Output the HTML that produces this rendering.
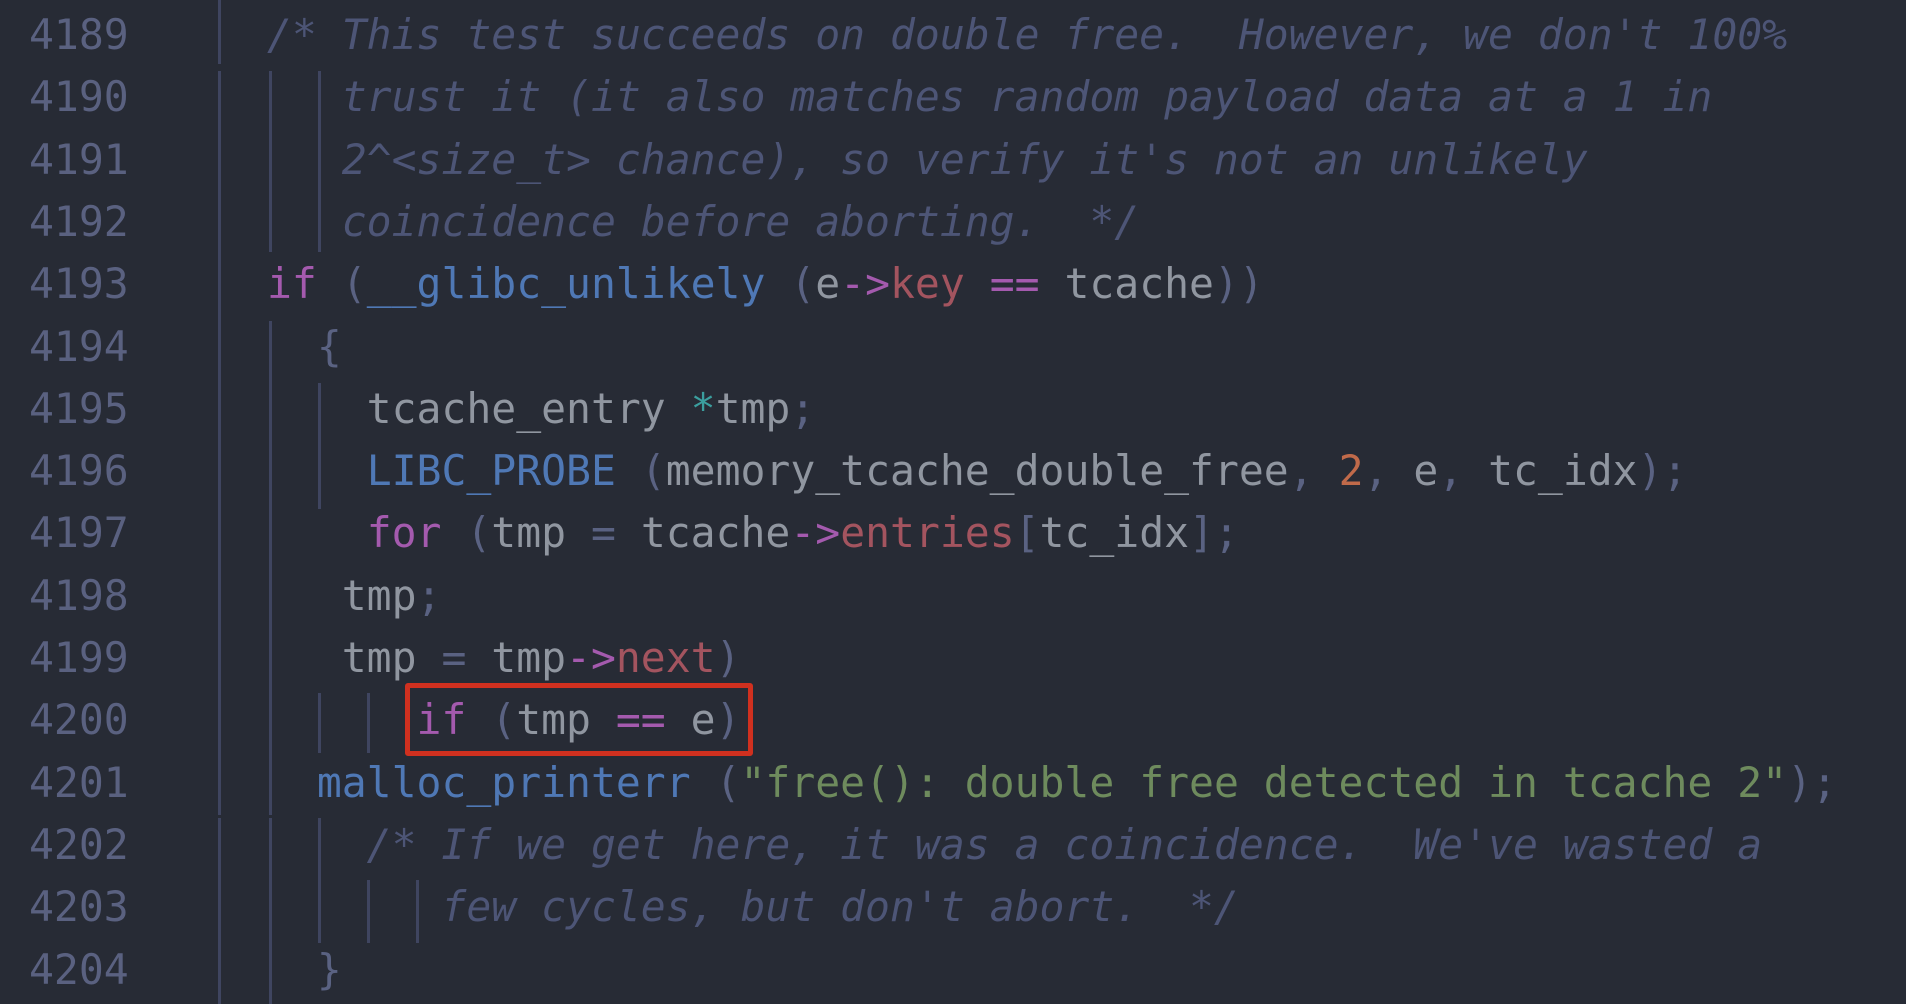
<!DOCTYPE html>
<html><head><meta charset="utf-8"><style>
body{margin:0;width:1906px;height:1002px;background:#272b35;overflow:hidden;position:relative;font-family:"DejaVu Sans Mono","Liberation Mono",monospace;font-size:41.4px}
.l{position:absolute;left:0;height:62px;line-height:62px;white-space:pre;color:#9096a0}
.n{position:absolute;left:29px;color:#5a6180}
.c{position:absolute;left:267px}
.cm{color:#4d5576;font-style:italic}
.k{color:#a45aae}.f{color:#4f78b5}.r{color:#a3545f}.s{color:#6e8b5d}.o{color:#c06a4a}.t{color:#3b9e9e}.p{color:#5a6282}
.g{position:absolute;width:3px;background:#3f4560}
.box{position:absolute;left:405px;top:683px;width:338px;height:63px;border:5px solid #d0301f;border-radius:3px}
</style></head><body>
<div class="g" style="left:218px;top:0;height:64px"></div>
<div class="g" style="left:218px;top:71px;height:744px"></div>
<div class="g" style="left:218px;top:818px;height:186px"></div>
<div class="g" style="left:269px;top:71px;height:181px"></div>
<div class="g" style="left:318px;top:71px;height:181px"></div>
<div class="g" style="left:269px;top:321px;height:494px"></div>
<div class="g" style="left:318px;top:383px;height:126px"></div>
<div class="g" style="left:318px;top:693px;height:60px"></div>
<div class="g" style="left:367px;top:693px;height:60px"></div>
<div class="g" style="left:269px;top:818px;height:186px"></div>
<div class="g" style="left:318px;top:818px;height:125px"></div>
<div class="g" style="left:367px;top:880px;height:63px"></div>
<div class="g" style="left:416px;top:880px;height:63px"></div>

<div class="l" style="top:4px"><span class="n">4189</span><span class="c cm">/* This test succeeds on double free.  However, we don't 100%</span></div>
<div class="l" style="top:66px"><span class="n">4190</span><span class="c cm">   trust it (it also matches random payload data at a 1 in</span></div>
<div class="l" style="top:129px"><span class="n">4191</span><span class="c cm">   2^&lt;size_t&gt; chance), so verify it's not an unlikely</span></div>
<div class="l" style="top:191px"><span class="n">4192</span><span class="c cm">   coincidence before aborting.  */</span></div>
<div class="l" style="top:253px"><span class="n">4193</span><span class="c"><span class="k">if</span> <span class="p">(</span><span class="f">__glibc_unlikely</span> <span class="p">(</span>e<span class="k">-&gt;</span><span class="r">key</span> <span class="k">==</span> tcache<span class="p">))</span></span></div>
<div class="l" style="top:316px"><span class="n">4194</span><span class="c">  <span class="p">{</span></span></div>
<div class="l" style="top:378px"><span class="n">4195</span><span class="c">    tcache_entry <span class="t">*</span>tmp<span class="p">;</span></span></div>
<div class="l" style="top:440px"><span class="n">4196</span><span class="c">    <span class="f">LIBC_PROBE</span> <span class="p">(</span>memory_tcache_double_free<span class="p">,</span> <span class="o">2</span><span class="p">,</span> e<span class="p">,</span> tc_idx<span class="p">);</span></span></div>
<div class="l" style="top:502px"><span class="n">4197</span><span class="c">    <span class="k">for</span> <span class="p">(</span>tmp <span class="p">=</span> tcache<span class="k">-&gt;</span><span class="r">entries</span><span class="p">[</span>tc_idx<span class="p">];</span></span></div>
<div class="l" style="top:565px"><span class="n">4198</span><span class="c">   tmp<span class="p">;</span></span></div>
<div class="l" style="top:627px"><span class="n">4199</span><span class="c">   tmp <span class="p">=</span> tmp<span class="k">-&gt;</span><span class="r">next</span><span class="p">)</span></span></div>
<div class="l" style="top:689px"><span class="n">4200</span><span class="c">      <span class="k">if</span> <span class="p">(</span>tmp <span class="k">==</span> e<span class="p">)</span></span></div>
<div class="l" style="top:752px"><span class="n">4201</span><span class="c">  <span class="f">malloc_printerr</span> <span class="p">(</span><span class="s">"free(): double free detected in tcache 2"</span><span class="p">);</span></span></div>
<div class="l" style="top:814px"><span class="n">4202</span><span class="c cm">    /* If we get here, it was a coincidence.  We've wasted a</span></div>
<div class="l" style="top:876px"><span class="n">4203</span><span class="c cm">       few cycles, but don't abort.  */</span></div>
<div class="l" style="top:939px"><span class="n">4204</span><span class="c">  <span class="p">}</span></span></div>
<div class="box"></div>
</body></html>
